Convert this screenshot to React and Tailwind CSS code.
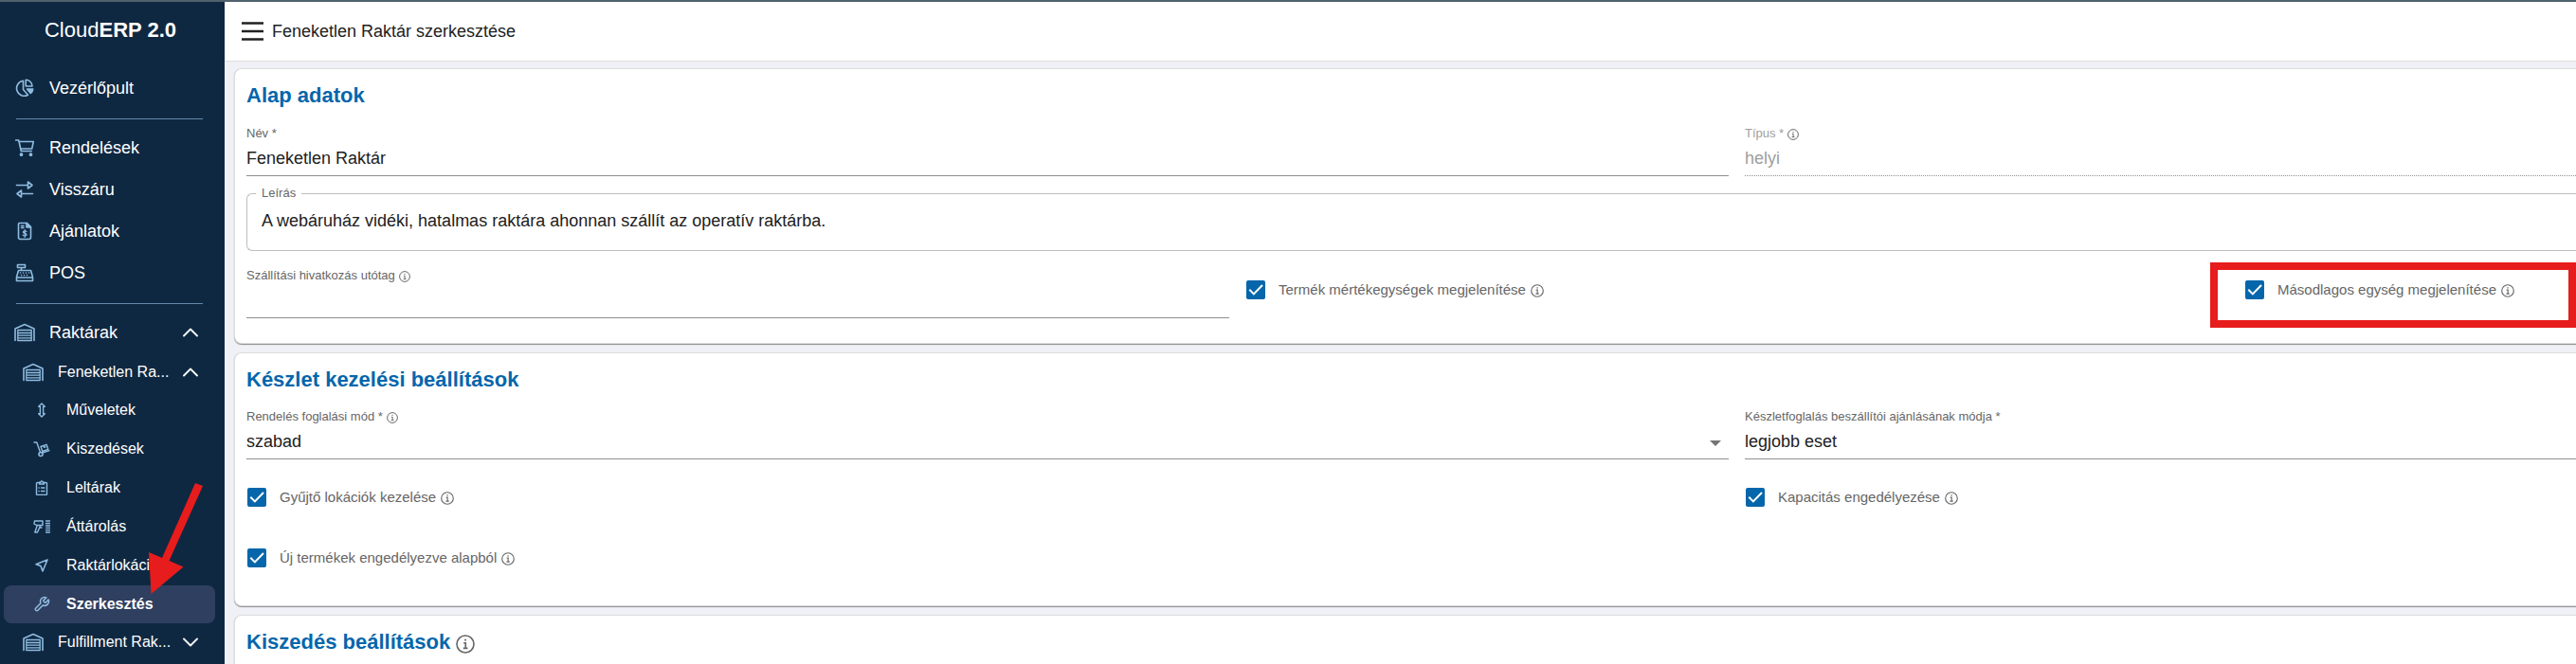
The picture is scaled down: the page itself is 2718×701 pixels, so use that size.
import { useState } from 'react';

function Icon({ children, className, viewBox = '0 0 20 20' }) {
  return (
    <svg
      viewBox={viewBox}
      className={className}
      fill="none"
      stroke="currentColor"
      strokeWidth="1.6"
      strokeLinejoin="round"
      strokeLinecap="round"
      aria-hidden="true"
    >
      {children}
    </svg>
  );
}

const PieIcon = () => (
  <Icon className="w-5 h-5">
    <path d="M8.5 2.3A8 8 0 1 0 13.5 17.2L8.5 11.5Z" />
    <path d="M11.2 1.2v6.8h6.8a6.8 6.8 0 0 0-6.800-6.800Z" />
    <path d="M12.500 11h6.300c-.2 2-1 3.500-2.500 4.500Z" fill="currentColor" />
  </Icon>
);

const CartIcon = () => (
  <Icon className="w-5 h-5">
    <path d="M.7 2h3l2.600 11.500h11M4.300 3.500h15l-1.600 7.500H6" />
    <circle cx="6.500" cy="17.200" r="1.100" fill="currentColor" />
    <circle cx="16.500" cy="17.200" r="1.100" fill="currentColor" />
  </Icon>
);

const SwapIcon = () => (
  <Icon className="w-5 h-5">
    <path d="M1.500 5.500h12M13.500 2v7l4.500-3.500ZM18.500 14.500h-12M6.500 11v7L2 14.500Z" />
  </Icon>
);

const OfferIcon = () => (
  <Icon className="w-5 h-5">
    <path d="M4.500 1.500h8l4 4v11a2 2 0 0 1-2 2h-9a2 2 0 0 1-2-2v-14a1 1 0 0 1 1-1Z" />
    <path d="M12 1.500v4.500h4.500Z" fill="currentColor" />
    <path d="M6.500 4.500h2.500M6.500 6.500h2.500" />
    <path strokeWidth="1.300" d="M12 10.500c-.5-.8-3.600-1-3.600.6 0 1.700 3.700.8 3.700 2.600 0 1.600-3.200 1.500-3.900.4M10.200 8.700v7.600" />
  </Icon>
);

const RegisterIcon = () => (
  <Icon className="w-5 h-5">
    <path d="M2.500 1.500h8v3h-8ZM6.500 4.500v3M3.500 7.500h13l2 7v4h-17v-4ZM1.500 15h17" />
    <path d="M5.500 10h.1M8.500 10h.1M11.500 10h.1M14.500 10h.1M6.500 12.500h.1M9.500 12.500h.1M12.500 12.500h.1" />
  </Icon>
);

const WarehouseIcon = () => (
  <Icon className="w-[22px] h-5" viewBox="0 0 22 20">
    <path d="M1 18.500V6L11 1.500 21 6v12.500" />
    <path strokeWidth="1.300" d="M3.800 18.500V7.500h14.400v11M4 10.500h14M4 13.200h14M4 15.800h14M4 18.500h14" />
  </Icon>
);

const MoveIcon = () => (
  <Icon className="w-4 h-4" viewBox="0 0 16 16">
    <path strokeWidth="1.400" d="M8 1l3.300 3.300H9.600v7.400h1.700L8 15l-3.300-3.300h1.700V4.300H4.700Z" />
  </Icon>
);

const TrolleyIcon = () => (
  <Icon className="w-[18px] h-[18px]" viewBox="0 0 18 18">
    <path strokeWidth="1.400" d="M1 2h2.800l3.700 10.500M9.300 13.300l7.700-2.600M8 6.500l6-2.200 1.800 5-6 2.200ZM11 5.500l.6 1.800 1.300-.5" />
    <circle cx="8" cy="14.500" r="2" />
  </Icon>
);

const ClipboardIcon = () => (
  <Icon className="w-4 h-4" viewBox="0 0 16 16">
    <path strokeWidth="1.400" d="M5.500 2.500H3.500a1 1 0 0 0-1 1v11a1 1 0 0 0 1 1h9a1 1 0 0 0 1-1v-11a1 1 0 0 0-1-1h-2M5.500 4V2.200h1.300a1.200 1.200 0 0 1 2.400 0h1.300V4ZM5 8h.2M7.500 8H11M5 11.500h.2M7.500 11.500H11" />
  </Icon>
);

const ScannerIcon = () => (
  <Icon className="w-[18px] h-4" viewBox="0 0 18 16">
    <path strokeWidth="1.400" d="M1.500 2h8.500v4.500H3.500L1 5ZM7.800 6.500 4.500 14H1.800L4.300 6.500M7.300 9H9" />
    <path strokeWidth="1.300" d="M13.500 2h4M13.500 4.500h4M13.500 7h4M13.500 9.300h4M13.500 11.700h4M13.500 14h4" />
  </Icon>
);

const LocationIcon = () => (
  <Icon className="w-4 h-4" viewBox="0 0 16 16">
    <path d="M14 2 2 6.700l5 1.900 2 5.400Z" />
  </Icon>
);

const WrenchIcon = () => (
  <Icon className="w-[18px] h-[18px]" viewBox="0 0 24 24">
    <path
      strokeWidth="2"
      d="M14.700 6.300a1 1 0 0 0 0 1.400l1.600 1.600a1 1 0 0 0 1.400 0l3.800-3.800a6 6 0 0 1-7.900 7.900l-6.900 6.900a2.100 2.100 0 0 1-3-3l6.900-6.900a6 6 0 0 1 7.900-7.900Z"
    />
  </Icon>
);

const ChevronIcon = ({ open }) => (
  <Icon className={open ? 'w-4 h-4 text-white' : 'w-4 h-4 text-white rotate-180'} viewBox="0 0 16 16">
    <path strokeWidth="1.800" d="M1 11.500l7-7 7 7" />
  </Icon>
);

const InfoIcon = ({ className }) => (
  <svg viewBox="0 0 16 16" className={className} fill="none" stroke="currentColor" strokeWidth="1.300" aria-hidden="true">
    <circle cx="8" cy="8" r="7.200" />
    <path d="M6.500 7h1.700v4.300M6.200 11.500h3.800M7.300 4.500h1.500" />
  </svg>
);

const mainLinks = [
  { label: 'Rendelések', icon: CartIcon },
  { label: 'Visszáru', icon: SwapIcon },
  { label: 'Ajánlatok', icon: OfferIcon },
  { label: 'POS', icon: RegisterIcon },
];

const warehouseLinks = [
  { label: 'Műveletek', icon: MoveIcon },
  { label: 'Kiszedések', icon: TrolleyIcon },
  { label: 'Leltárak', icon: ClipboardIcon },
  { label: 'Áttárolás', icon: ScannerIcon },
  { label: 'Raktárlokációk', icon: LocationIcon },
  { label: 'Szerkesztés', icon: WrenchIcon, active: true },
];

function MainLink({ label, icon: LinkIcon }) {
  return (
    <a href="#" className="flex items-center h-11 pl-4 text-lg text-white">
      <span className="w-9 text-[#8fbce0]">
        <LinkIcon />
      </span>
      {label}
    </a>
  );
}

function GroupButton({ label, open, onClick }) {
  return (
    <button type="button" onClick={onClick} aria-expanded={open} className="flex items-center w-full h-10 pl-6 pr-7 text-base text-white">
      <span className="w-[37px] text-left text-[#8fbce0]">
        <WarehouseIcon />
      </span>
      <span className="flex-1 text-left">{label}</span>
      <ChevronIcon open={open} />
    </button>
  );
}

function Sidebar() {
  const [open, setOpen] = useState(true);
  const [subOpen, setSubOpen] = useState(true);
  const [fulfillmentOpen, setFulfillmentOpen] = useState(false);

  return (
    <aside className="relative w-[237px] shrink-0 bg-[#0f2842]">
      <div className="h-[69px] pt-4 pr-1 text-center text-[22px] leading-7 text-white">
        Cloud<b>ERP 2.0</b>
      </div>
      <nav>
        <MainLink label="Vezérlőpult" icon={PieIcon} />
        <hr className="ml-[17px] mr-[23px] mt-[10px] mb-2 border-[#648aaa]" />
        {mainLinks.map((link) => (
          <MainLink key={link.label} {...link} />
        ))}
        <hr className="ml-[17px] mr-[23px] mt-[10px] mb-2 border-[#648aaa]" />
        <button
          type="button"
          onClick={() => setOpen(!open)}
          aria-expanded={open}
          className="flex items-center w-full h-11 pl-[15px] pr-7 text-lg text-white"
        >
          <span className="w-[37px] text-[#8fbce0]">
            <WarehouseIcon />
          </span>
          <span className="flex-1 text-left">Raktárak</span>
          <ChevronIcon open={open} />
        </button>
        {open && (
          <>
            <GroupButton label="Feneketlen Ra..." open={subOpen} onClick={() => setSubOpen(!subOpen)} />
            {subOpen && (
              <ul className="flex flex-col gap-px pl-1 pr-[10px]">
                {warehouseLinks.map(({ label, icon: LinkIcon, active }) => (
                  <li key={label}>
                    <a
                      href="#"
                      className={`flex items-center h-10 pl-[30px] rounded-lg text-base text-white ${active ? 'bg-[#2f3f5f] font-bold' : ''}`}
                    >
                      <span className="flex justify-center w-5 mr-4 text-[#8fbce0]">
                        <LinkIcon />
                      </span>
                      {label}
                    </a>
                  </li>
                ))}
              </ul>
            )}
            <GroupButton label="Fulfillment Rak..." open={fulfillmentOpen} onClick={() => setFulfillmentOpen(!fulfillmentOpen)} />
          </>
        )}
      </nav>

      {/* arrow pointing at the edit page */}
      <svg viewBox="0 0 60 120" className="absolute left-[155px] top-[507px] w-[60px] h-[120px]" aria-hidden="true">
        <path d="M51 1l8 3-35.500 79 15 6.500-34 28.500L2 74l14 6Z" fill="#e71c1c" />
      </svg>
    </aside>
  );
}

function Card({ title, info, children }) {
  return (
    <section className="pl-3 pt-3 rounded-l-lg bg-white border border-r-0 border-[#dddddf] shadow-[0_1px_1px_#8c8c8c]">
      <h2 className="flex items-center gap-[6px] text-[22px] leading-8 font-bold text-[#0566ab]">
        {title}
        {info && <InfoIcon className="w-5 h-5 mt-1 text-[#666666]" />}
      </h2>
      {children}
    </section>
  );
}

function FieldLabel({ id, children, info, disabled }) {
  return (
    <div className="flex items-center gap-1 h-4 text-[13px] leading-4 text-[#666666]">
      <label htmlFor={id} className={disabled ? 'text-[#9e9e9e]' : ''}>
        {children}
      </label>
      {info && <InfoIcon className="w-3 h-3 mt-[2px]" />}
    </div>
  );
}

function TextField({ id, label, value, info, disabled }) {
  return (
    <div>
      <FieldLabel id={id} info={info} disabled={disabled}>
        {label}
      </FieldLabel>
      <input
        id={id}
        type="text"
        defaultValue={value}
        disabled={disabled}
        className="block w-full h-[37px] text-lg text-[#212121] border-b border-[#8f8f8f] outline-none disabled:text-[#9e9e9e] disabled:border-dotted"
      />
    </div>
  );
}

function SelectField({ id, label, value, info, arrow }) {
  return (
    <div>
      <FieldLabel id={id} info={info}>
        {label}
      </FieldLabel>
      <div className="relative">
        <select id={id} defaultValue={value} className="block w-full h-[37px] appearance-none text-lg text-[#212121] border-b border-[#8f8f8f] outline-none">
          <option>{value}</option>
        </select>
        {arrow && (
          <svg viewBox="0 0 12 6" className="absolute right-2 top-[17px] w-3 h-[6px]" aria-hidden="true">
            <path d="M0 0h12L6 6Z" fill="#757575" />
          </svg>
        )}
      </div>
    </div>
  );
}

function Checkbox({ id, label }) {
  return (
    <div className="flex items-center pl-px text-[15px] leading-5 text-[#666666]">
      <span className="relative w-5 h-5 mr-[14px]">
        <input id={id} type="checkbox" defaultChecked className="peer block w-5 h-5 appearance-none rounded-xs border-2 border-[#757575] checked:border-[#0566ab] checked:bg-[#0566ab]" />
        <svg viewBox="0 0 20 20" className="absolute inset-0 w-5 h-5 pointer-events-none opacity-0 peer-checked:opacity-100" fill="none" stroke="#ffffff" strokeWidth="2" aria-hidden="true">
          <path d="M3.300 9.800l4.600 4.600L17 5" />
        </svg>
      </span>
      <label htmlFor={id}>{label}</label>
      <InfoIcon className="w-[14px] h-[14px] ml-[5px] mt-[2px]" />
    </div>
  );
}

export default function App() {
  return (
    <div className="flex flex-col h-screen overflow-hidden font-['Liberation_Sans',Arial,sans-serif]">
      <div className="h-[2px] shrink-0 bg-[#50626e]" />
      <div className="flex flex-1 min-h-0">
        <Sidebar />
        <div className="flex-1 min-w-0 overflow-hidden bg-[#eff1f6]">
          <header className="flex items-center h-[63px] pl-[18px] bg-white border-b border-[#dedcde]">
            <button type="button" aria-label="Menü" className="mr-[9px] text-[#212121]">
              <svg viewBox="0 0 23 20" className="w-[23px] h-5" stroke="currentColor" strokeWidth="2.400" aria-hidden="true">
                <path d="M0 1.500h23M0 10h23M0 18.500h23" />
              </svg>
            </button>
            <h1 className="text-lg text-[#212121]">Feneketlen Raktár szerkesztése</h1>
          </header>

          <main className="flex flex-col gap-[9px] pt-[7px] pl-[10px]">
            <Card title="Alap adatok">
              <div className="grid grid-cols-[1564fr_877fr] gap-[17px] mt-4">
                <TextField id="name" label="Név *" value="Feneketlen Raktár" />
                <TextField id="type" label="Típus *" value="helyi" info disabled />
              </div>
              <fieldset className="mt-[9px] pl-[9px] border border-r-0 border-[#bdbdbd] rounded-l-md">
                <legend className="px-[6px] text-[13px] leading-[18px] text-[#666666]">
                  <label htmlFor="description">Leírás</label>
                </legend>
                <textarea
                  id="description"
                  defaultValue="A webáruház vidéki, hatalmas raktára ahonnan szállít az operatív raktárba."
                  className="block w-full h-[51px] pl-[6px] pt-2 resize-none text-lg leading-6 text-[#212121] outline-none"
                />
              </fieldset>
              <div className="grid grid-cols-[1037fr_1037fr_350fr] gap-[17px] mt-[18px] pb-[26px]">
                <TextField id="suffix" label="Szállítási hivatkozás utótag" value="" info />
                <div className="pt-[13px]">
                  <Checkbox id="units" label="Termék mértékegységek megjelenítése" />
                </div>
                <div className="relative pt-[13px]">
                  <Checkbox id="secondary-unit" label="Másodlagos egység megjelenítése" />
                  <div className="absolute -left-9 right-0 -top-[6px] h-[69px] border-8 border-[#e71c1c] pointer-events-none" />
                </div>
              </div>
            </Card>

            <Card title="Készlet kezelési beállítások">
              <div className="grid grid-cols-[1564fr_877fr] gap-x-[17px] mt-[15px]">
                <SelectField id="reservation" label="Rendelés foglalási mód *" value="szabad" info arrow />
                <SelectField id="supplier" label="Készletfoglalás beszállítói ajánlásának módja *" value="legjobb eset" />
              </div>
              <div className="grid grid-cols-[1564fr_877fr] gap-x-[17px] gap-y-11 pt-[30px] pb-10">
                <Checkbox id="collecting" label="Gyűjtő lokációk kezelése" />
                <Checkbox id="capacity" label="Kapacitás engedélyezése" />
                <Checkbox id="new-products" label="Új termékek engedélyezve alapból" />
              </div>
            </Card>

            <Card title="Kiszedés beállítások" info>
              <div className="h-10" />
            </Card>
          </main>
        </div>
      </div>
    </div>
  );
}
